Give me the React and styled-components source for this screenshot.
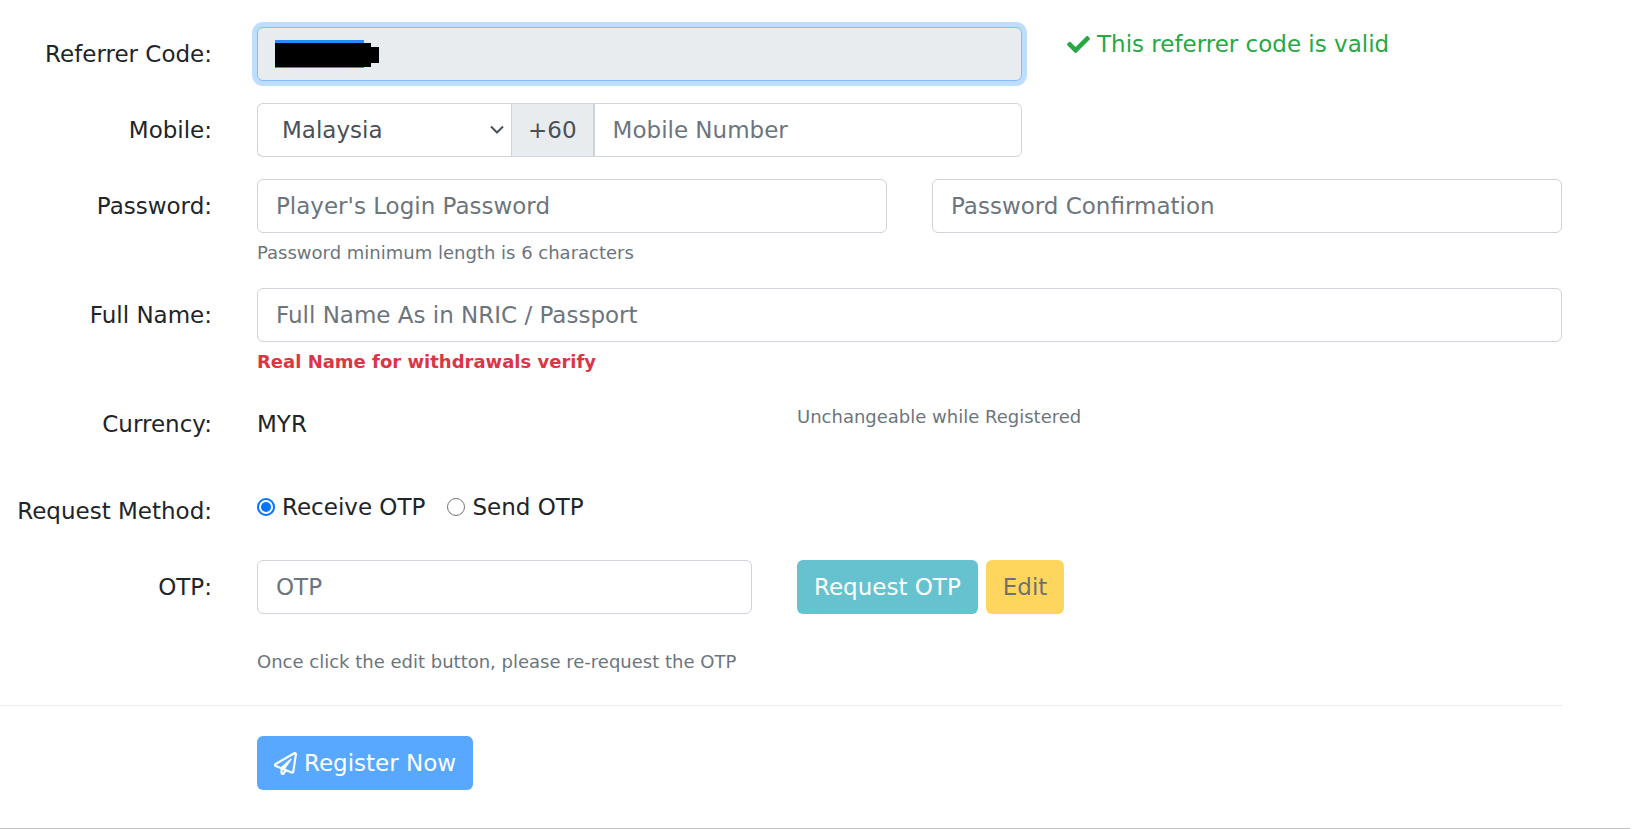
import React, { useState } from 'react';
import styled, { createGlobalStyle } from 'styled-components';
import { FaCheck, FaRegPaperPlane } from 'react-icons/fa';

const GlobalStyle = createGlobalStyle`
  * {
    box-sizing: border-box;
  }

  body {
    margin: 0;
    background: #fff;
    color: #212529;
    font-family: Verdana, 'DejaVu Sans', sans-serif;
    font-size: 23px;
    line-height: 34px;
  }

  input, select, button {
    font: inherit;
    margin: 0;
  }
`;

const Page = styled.main`
  padding-top: 27px;
`;

const Form = styled.form`
  padding-right: 73px;
`;

const Row = styled.div`
  display: grid;
  grid-template-columns: 212px repeat(10, minmax(0, 1fr));
  column-gap: 45px;
  align-items: start;
  margin-bottom: 22px;
  min-height: ${({ $minHeight }) => $minHeight || 54}px;
`;

const Col = styled.div`
  grid-column: span ${({ $span }) => $span};
  min-width: 0;
`;

const Label = styled.label`
  padding: 10px 0;
  text-align: right;
  white-space: nowrap;
`;

const TextInput = styled.input`
  display: block;
  width: 100%;
  height: 54px;
  padding: 0 18px;
  border: 1px solid #ced4da;
  border-radius: 6px;
  background: #fff;
  color: #495057;
  outline: none;

  &::placeholder {
    color: #6c757d;
    opacity: 1;
  }
`;

const ReferrerField = styled.div`
  position: relative;

  svg {
    position: absolute;
    left: 18px;
    top: 13px;
  }
`;

const ReferrerInput = styled(TextInput)`
  border-color: #80bdff;
  background: #e9ecef;
  box-shadow: 0 0 0 5px rgba(0, 123, 255, 0.25);
`;

const ValidMessage = styled.div`
  display: flex;
  align-items: center;
  gap: 7px;
  color: #28a745;
  white-space: nowrap;
`;

const InputGroup = styled.div`
  display: flex;
`;

const SelectWrap = styled.div`
  position: relative;
  flex: 1;

  svg {
    position: absolute;
    right: 7px;
    top: 22px;
    pointer-events: none;
  }
`;

const Select = styled.select`
  appearance: none;
  display: block;
  width: 100%;
  height: 54px;
  padding: 0 24px;
  border: 1px solid #ced4da;
  border-right: 0;
  border-radius: 6px 0 0 6px;
  background: #fff;
  color: #495057;
`;

const Prefix = styled.span`
  padding: 9px 16px;
  border: 1px solid #ced4da;
  background: #e9ecef;
  color: #495057;
`;

const MobileInput = styled(TextInput)`
  flex: none;
  width: 56%;
  border-radius: 0 6px 6px 0;
`;

const Help = styled.small`
  display: block;
  margin-top: ${({ $top }) => $top}px;
  color: ${({ $danger }) => ($danger ? '#dc3545' : '#6c757d')};
  font-size: 18px;
  font-weight: ${({ $danger }) => ($danger ? 700 : 400)};
  line-height: 27px;
`;

const Value = styled.div`
  padding: 10px 0;
`;

const RadioGroup = styled.div`
  display: flex;
  gap: 22px;
  padding: 6px 0;
`;

const RadioLabel = styled.label`
  display: flex;
  align-items: center;
  gap: 7px;
  white-space: nowrap;
`;

const Radio = styled.input`
  appearance: none;
  display: grid;
  place-items: center;
  width: 18px;
  height: 18px;
  border: 1px solid #767676;
  border-radius: 50%;
  background: #fff;

  &:checked {
    border: 2px solid #0075ff;
  }

  &:checked::before {
    content: '';
    width: 10px;
    height: 10px;
    border-radius: 50%;
    background: #0075ff;
  }
`;

const ButtonRow = styled.div`
  display: flex;
  gap: 8px;
`;

const Button = styled.button`
  display: inline-flex;
  align-items: center;
  gap: 7px;
  height: 54px;
  padding: 0 17px;
  border: 0;
  border-radius: 6px;
  background: ${({ $bg }) => $bg};
  color: ${({ $color }) => $color || '#fff'};
  opacity: 0.65;
  white-space: nowrap;
`;

const Divider = styled.hr`
  height: 1px;
  margin: 30px 0;
  border: 0;
  background: #ebebeb;
`;

const OtpRow = styled(Row)`
  margin-bottom: 0;
`;

const Submit = styled(Col)`
  grid-column: 2 / -1;
`;

const BottomLine = styled.div`
  height: 1px;
  margin: 38px 5px 0 0;
  background: #c0c0c0;
`;

function App() {
  const [method, setMethod] = useState('receive');

  return (
    <>
      <GlobalStyle />
      <Page>
        <Form onSubmit={(e) => e.preventDefault()}>
          <Row>
            <Label htmlFor="referrer">Referrer Code:</Label>
            <Col $span={6}>
              <ReferrerField>
                <ReferrerInput id="referrer" type="text" readOnly />
                {/* code is masked out */}
                <svg width="104" height="28" shapeRendering="crispEdges" aria-hidden="true">
                  <rect width="89" height="28" fill="#2a8bff" />
                  <path d="M0 3h96v4h8v16h-8v4H0z" fill="#000" />
                </svg>
              </ReferrerField>
            </Col>
            <Col $span={4}>
              <ValidMessage>
                <FaCheck size={23} />
                This referrer code is valid
              </ValidMessage>
            </Col>
          </Row>

          <Row>
            <Label htmlFor="mobile">Mobile:</Label>
            <Col $span={6}>
              <InputGroup>
                <SelectWrap>
                  <Select aria-label="Country" defaultValue="MY">
                    <option value="MY">Malaysia</option>
                  </Select>
                  <svg width="14" height="10" viewBox="0 0 14 10" fill="none" aria-hidden="true">
                    <path d="M1 1.5l6 6 6-6" stroke="#495057" strokeWidth="2" />
                  </svg>
                </SelectWrap>
                <Prefix>+60</Prefix>
                <MobileInput id="mobile" type="tel" placeholder="Mobile Number" />
              </InputGroup>
            </Col>
          </Row>

          <Row>
            <Label htmlFor="password">Password:</Label>
            <Col $span={5}>
              <TextInput id="password" type="password" placeholder="Player's Login Password" />
              <Help $top={6}>Password minimum length is 6 characters</Help>
            </Col>
            <Col $span={5}>
              <TextInput type="password" aria-label="Password Confirmation" placeholder="Password Confirmation" />
            </Col>
          </Row>

          <Row>
            <Label htmlFor="fullname">Full Name:</Label>
            <Col $span={10}>
              <TextInput id="fullname" type="text" placeholder="Full Name As in NRIC / Passport" />
              <Help $top={6} $danger>Real Name for withdrawals verify</Help>
            </Col>
          </Row>

          <Row $minHeight={65}>
            <Label as="div">Currency:</Label>
            <Col $span={4}>
              <Value>MYR</Value>
            </Col>
            <Col $span={6}>
              <Help $top={6}>Unchangeable while Registered</Help>
            </Col>
          </Row>

          <Row>
            <Label as="div" id="method-label">Request Method:</Label>
            <Col $span={10}>
              <RadioGroup role="radiogroup" aria-labelledby="method-label">
                <RadioLabel>
                  <Radio
                    type="radio"
                    name="method"
                    checked={method === 'receive'}
                    onChange={() => setMethod('receive')}
                  />
                  Receive OTP
                </RadioLabel>
                <RadioLabel>
                  <Radio
                    type="radio"
                    name="method"
                    checked={method === 'send'}
                    onChange={() => setMethod('send')}
                  />
                  Send OTP
                </RadioLabel>
              </RadioGroup>
            </Col>
          </Row>

          <OtpRow>
            <Label htmlFor="otp">OTP:</Label>
            <Col $span={4}>
              <TextInput id="otp" type="text" placeholder="OTP" />
              <Help $top={34}>Once click the edit button, please re-request the OTP</Help>
            </Col>
            <Col $span={6}>
              <ButtonRow>
                <Button type="button" disabled $bg="#17a2b8">Request OTP</Button>
                <Button type="button" disabled $bg="#ffc107" $color="#212529">Edit</Button>
              </ButtonRow>
            </Col>
          </OtpRow>

          <Divider />

          <Row>
            <Submit>
              <Button type="submit" disabled $bg="#007bff">
                <FaRegPaperPlane size={23} />
                Register Now
              </Button>
            </Submit>
          </Row>
        </Form>
        <BottomLine />
      </Page>
    </>
  );
}

export default App;
